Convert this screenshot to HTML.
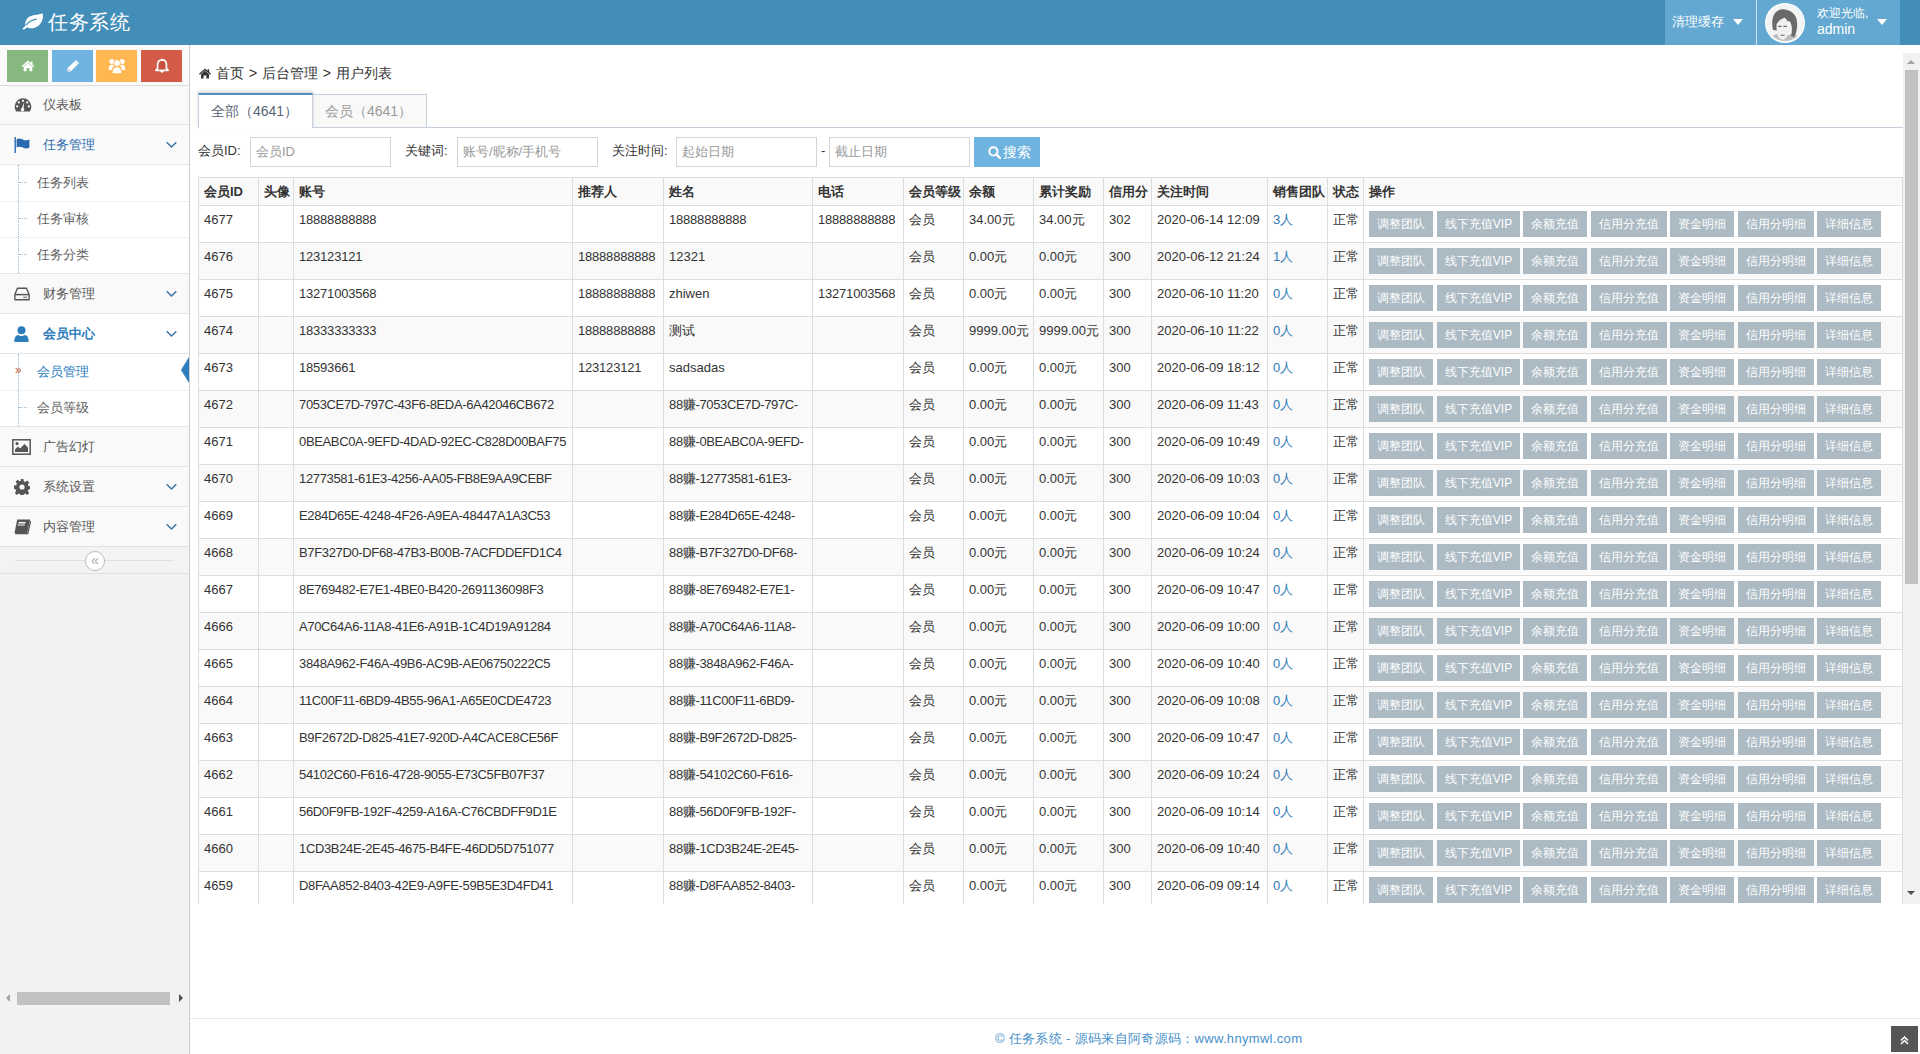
<!DOCTYPE html>
<html><head><meta charset="utf-8"><title>任务系统</title><style>
*{margin:0;padding:0;box-sizing:border-box}
html,body{width:1920px;height:1054px;overflow:hidden;background:#fff;font-family:"Liberation Sans",sans-serif;font-size:13px;color:#393939}
.abs{position:absolute}
#hdr{position:absolute;left:0;top:0;width:1920px;height:45px;background:#438eb9}
#brand{position:absolute;left:22px;top:7px;height:30px;color:#fff;font-size:20px;line-height:30px;white-space:nowrap}
#brand svg{position:absolute;left:0;top:6px}
#brand span{position:absolute;left:26px;top:0;letter-spacing:0.5px}
.lb{position:absolute;top:0;height:45px;background:#62a8d1;color:#fff}
#side{position:absolute;left:0;top:45px;width:190px;height:1009px;background:#f2f2f2;border-right:1px solid #ccc}
#sc{position:absolute;left:0;top:45px;width:189px;height:41px;background:#fafafa;border-bottom:1px solid #ddd}
.scb{position:absolute;top:50px;width:41px;height:32px}
.scb svg{position:absolute;left:50%;top:50%;transform:translate(-50%,-50%)}
.nb{position:absolute;left:0;width:189px;height:1px;background:#e5e5e5}
.ni{position:absolute;left:0;width:189px}
.nic{position:absolute;left:14px;top:50%;transform:translateY(-50%);line-height:0}
.nt{position:absolute;left:43px;top:50%;transform:translateY(-50%);font-size:13px;line-height:16px;color:#585858;white-space:nowrap}
.nt.open{color:#2b6cb0}
.nt.active{color:#2b7dbc;font-weight:bold}
.chev{position:absolute;left:166px;top:50%;transform:translateY(-50%);line-height:0}
.sm{position:absolute;left:0;width:189px;background:#fff}
.vdot{position:absolute;left:18px;width:1px;border-left:1px dotted #9dbdd6}
.hdot{position:absolute;left:0;width:189px;height:1px;border-top:1px dotted #e4e4e4}
.si{position:absolute;left:37px;height:35px;line-height:35px;font-size:13px;color:#616161;white-space:nowrap}
.si.act{color:#2b7dbc}
.mk{position:absolute;left:-18px;top:17px;width:8px;height:1px;border-top:1px dotted #9dbdd6}
.raq{position:absolute;left:-22px;top:-1px;color:#c86139;font-size:12px}
.tri{position:absolute;left:181px;width:0;height:0;border-top:13px solid transparent;border-bottom:13px solid transparent;border-right:8px solid #2b7dbc}
#coll{position:absolute;left:0;top:546px;width:189px;height:28px;background:#f3f3f3;border-top:1px solid #e0e0e0;border-bottom:1px solid #e0e0e0}
#coll .ln{position:absolute;left:15px;top:13px;width:159px;height:1px;background:#e0e0e0}
#coll .cc{position:absolute;left:85px;top:4px;width:20px;height:20px;border-radius:50%;background:#fff;border:1px solid #bbb;color:#aaa;font-size:14px;line-height:16px;text-align:center}
#content{position:absolute;left:190px;top:45px;width:1730px;height:1009px;background:#fff}
.hl{position:absolute;height:1px;background:#ddd}
.vl{position:absolute;width:1px;background:#ddd}
.thbg{position:absolute;background:#f9f9f9}
.rbg{position:absolute}
.th{position:absolute;height:27px;line-height:27px;font-weight:bold;color:#333;white-space:nowrap}
.td{position:absolute;line-height:18px;padding-top:5px;color:#333;white-space:nowrap}
.td.lk{color:#337ab7}
.td.gd{letter-spacing:-0.35px}
.td.ph{letter-spacing:-0.2px}
.btn{position:absolute;height:26px;line-height:26px;background:#abbac3;color:#fff;font-size:12px;text-align:center;white-space:nowrap}
.inp{position:absolute;top:137px;height:30px;border:1px solid #d5d5d5;background:#fff;color:#999;font-size:13px;line-height:28px;padding-left:5px;white-space:nowrap}
.lbl{position:absolute;top:142px;line-height:18px;color:#333;white-space:nowrap}
</style></head><body>
<div id="hdr">
 <div id="brand"><svg width="22" height="17" viewBox="0 0 22 17"><path d="M20.4 0.2C21.6 3 21.2 8 17.2 12 13.6 15.4 8.2 16.4 5.2 14.2L2.2 16.4C1.3 17 .3 16 .9 15.3L3.7 12.6C2.6 9.2 4.2 5.2 8.2 3.2 12.2 1.2 17 2 20.4 .2Z" fill="#fff"/><path d="M4.6 11.6C7 8.6 10.4 6.8 14.4 6.2" fill="none" stroke="#438eb9" stroke-width="1.2" stroke-linecap="round"/></svg><span>任务系统</span></div>
 <div class="lb" style="left:1665px;width:91px"><span class="abs" style="left:7px;top:13px;font-size:13px;line-height:18px">清理缓存</span><span class="abs" style="left:68px;top:19px;line-height:0"><svg width="10" height="6" viewBox="0 0 10 6"><path d="M0 0h10L5 6z" fill="#fff"/></svg></span></div>
 <div class="abs" style="left:1756px;top:0;width:1px;height:45px;background:#cfe3f1"></div>
 <div class="lb" style="left:1757px;width:143px">
   <svg class="abs" style="left:8px;top:3px" width="40" height="40" viewBox="0 0 40 40">
     <defs><clipPath id="av"><circle cx="20" cy="20" r="18"/></clipPath></defs>
     <circle cx="20" cy="20" r="20" fill="#fff"/>
     <g clip-path="url(#av)">
      <rect x="0" y="0" width="40" height="40" fill="#f4f4f4"/>
      <path d="M2 40c1-6 6-8 11-9l7 2 7-2c5 1 10 3 11 9z" fill="#bdbdbd"/>
      <path d="M8 27c-1.5-6-1-13 2-17 2.5-3 6-4 9.5-3.6 5 .6 9.5 3 11.5 8 1.5 4 1.4 9 .6 13-.5 2.5-1.5 5-2.6 6.5l-3-1c.8-2.5 1-5 .8-8-.2-3.5-1-5.5-2.5-7-3 1-6.5 2.4-9.6 5.5-1.2 1.3-2 2.8-2.6 4.2z" fill="#6a6a6a"/>
      <path d="M11.6 21c1.6-3 4.6-5 7.8-6.2 2.2 1 3.6 3.4 4.2 6.6.5 3.2.4 6.4-.5 9.6-.8 2.6-2.6 5.2-4.8 5.6-2.4.3-4.4-1.2-5.4-3.8-1-2.6-1.6-6.4-1.3-11.8z" fill="#f0f0f0"/>
      <path d="M13.2 23.4h3.4M18.4 23.4h3.4M15.6 32.2h4" stroke="#6a6a6a" stroke-width="1.1"/>
     </g>
     <circle cx="20" cy="20" r="18.2" fill="none" stroke="#cfe0ec" stroke-width=".6" stroke-dasharray="1.5 1"/>
   </svg>
   <span class="abs" style="left:60px;top:6px;font-size:12px;line-height:15px">欢迎光临,</span>
   <span class="abs" style="left:60px;top:21px;font-size:14px;line-height:17px">admin</span>
   <span class="abs" style="left:120px;top:19px;line-height:0"><svg width="10" height="6" viewBox="0 0 10 6"><path d="M0 0h10L5 6z" fill="#fff"/></svg></span>
 </div>
</div>
<div id="side"></div>
<div id="sc"></div>
<div class="scb" style="left:7px;background:#87b87f"><svg width="13" height="11" viewBox="0 0 13 11"><path d="M6.5 0L0 5.8l.9 1L6.5 1.9l5.6 4.9.9-1-2-1.8V1h-1.6v1.6z" fill="#fff"/><path d="M2.2 6.2L6.5 2.5l4.3 3.7V11H8V7.8H5V11H2.2z" fill="#fff"/></svg></div>
<div class="scb" style="left:52px;background:#6fb3e0"><svg width="13" height="13" viewBox="0 0 13 13"><path d="M9.4 0.4l3.2 3.2L4.2 12H1V8.8z" fill="#fff"/><path d="M8.2 1.8l3 3" stroke="#6fb3e0" stroke-width=".7"/><path d="M1.6 9.4l2 2" stroke="#c5a3c8" stroke-width="1"/></svg></div>
<div class="scb" style="left:96px;background:#ffb752"><svg width="17" height="15" viewBox="0 0 17 15"><circle cx="3.4" cy="3" r="2.5" fill="#fff"/><circle cx="13.6" cy="3" r="2.5" fill="#fff"/><path d="M0 11.4c0-3.2 1-5.2 3.5-5.2 1 0 1.7.3 2.2.7-1.3 1.1-2 2.7-2.1 4.5z" fill="#fff"/><path d="M17 11.4c0-3.2-1-5.2-3.5-5.2-1 0-1.7.3-2.2.7 1.3 1.1 2 2.7 2.1 4.5z" fill="#fff"/><circle cx="8.5" cy="4.6" r="3.4" fill="#fff" stroke="#ffb752" stroke-width=".8"/><path d="M3.8 15c0-3.8 1.4-6.4 4.7-6.4s4.7 2.6 4.7 6.4z" fill="#fff" stroke="#ffb752" stroke-width=".6"/></svg></div>
<div class="scb" style="left:141px;background:#d15b47"><svg width="14" height="15" viewBox="0 0 14 15"><path d="M7 1.3c2.6 0 4.4 2 4.4 4.8v3.6l1.7 2.1H.9l1.7-2.1V6.1C2.6 3.3 4.4 1.3 7 1.3z" fill="#c9503d" stroke="#fff" stroke-width="1.7" stroke-linejoin="round"/><path d="M5.3 12.6a1.7 1.7 0 0 0 3.4 0z" fill="#fff"/><rect x="6.3" y="0" width="1.4" height="1.6" fill="#fff"/></svg></div>
<div class="ni" style="top:86px;height:38px;background:#f9f9f9"><span class="nic"><svg width="18" height="16" viewBox="0 0 18 16"><path d="M9 1.2A8.3 8.3 0 0 0 0.7 9.5c0 2 .6 3.7 1.7 5.1h13.2c1.1-1.4 1.7-3.1 1.7-5.1A8.3 8.3 0 0 0 9 1.2z" fill="#555"/><circle cx="9" cy="3.8" r="1.1" fill="#fff"/><circle cx="4.8" cy="5.4" r="1.1" fill="#fff"/><circle cx="13.2" cy="5.4" r="1.1" fill="#fff"/><circle cx="3.2" cy="9.4" r="1.1" fill="#fff"/><circle cx="14.8" cy="9.4" r="1.1" fill="#fff"/><path d="M10.2 5.2L9.6 11.2A1.7 1.7 0 1 1 7.9 11z" fill="#fff"/></svg></span><span class="nt normal">仪表板</span></div>
<div class="nb" style="top:124px"></div>
<div class="ni" style="top:125px;height:39px;background:#fafafa"><span class="nic"><svg width="18" height="16" viewBox="0 0 18 16"><rect x="0.5" y="0" width="1.4" height="16" fill="#2b6cb0"/><path d="M2.6 2.2c2.2-1.4 4.3-.6 6.2.2 1.8.8 3.7 1.5 6.6.2v8.2c-2.9 1.3-4.8.6-6.6-.2-1.9-.8-4-1.6-6.2-.2z" fill="#2b6cb0"/></svg></span><span class="nt open">任务管理</span><span class="chev"><svg width="11" height="7" viewBox="0 0 11 7"><path d="M0.7 0.7L5.5 5.5 10.3 0.7" fill="none" stroke="#3a6fa0" stroke-width="1.4"/></svg></span></div>
<div class="nb" style="top:273px"></div>
<div class="ni" style="top:274px;height:39px;background:#f9f9f9"><span class="nic"><svg width="16" height="14" viewBox="0 0 18 14" preserveAspectRatio="none"><path d="M4 1.2h10l3 6.2V12.8H1V7.4z" fill="none" stroke="#555" stroke-width="1.5" stroke-linejoin="round"/><path d="M1.2 7.6h15.6" stroke="#555" stroke-width="1.5"/><rect x="10.6" y="9.6" width="1.5" height="1.5" fill="#555"/><rect x="13" y="9.6" width="1.5" height="1.5" fill="#555"/></svg></span><span class="nt normal">财务管理</span><span class="chev"><svg width="11" height="7" viewBox="0 0 11 7"><path d="M0.7 0.7L5.5 5.5 10.3 0.7" fill="none" stroke="#3a6fa0" stroke-width="1.4"/></svg></span></div>
<div class="nb" style="top:313px"></div>
<div class="ni" style="top:314px;height:39px;background:#fff"><span class="nic"><svg width="15" height="16" viewBox="0 0 15 16"><circle cx="7.5" cy="4.3" r="4" fill="#2b7dbc"/><path d="M0.3 16c0-3.3 .6-6.6 4.2-7 1 .8 1.9 1.1 3 1.1s2-.3 3-1.1c3.6 .4 4.2 3.7 4.2 7z" fill="#2b7dbc"/></svg></span><span class="nt active">会员中心</span><span class="chev"><svg width="11" height="7" viewBox="0 0 11 7"><path d="M0.7 0.7L5.5 5.5 10.3 0.7" fill="none" stroke="#3a6fa0" stroke-width="1.4"/></svg></span></div>
<div class="nb" style="top:426px"></div>
<div class="ni" style="top:427px;height:39px;background:#f9f9f9"><span class="nic"><svg width="19" height="16" viewBox="0 0 19 16" style="margin-left:-2px"><rect x="0.8" y="0.8" width="17.4" height="14.4" fill="none" stroke="#555" stroke-width="1.5"/><circle cx="5" cy="4.6" r="1.6" fill="#555"/><path d="M3 13V10.4L6 7.6 8 9.6 12.5 5 16 8.6V13z" fill="#555"/></svg></span><span class="nt normal">广告幻灯</span></div>
<div class="nb" style="top:466px"></div>
<div class="ni" style="top:467px;height:39px;background:#f9f9f9"><span class="nic"><svg width="16" height="16" viewBox="0 0 16 16"><path d="M6.6 0h2.8l.4 2.3 1.5.7 1.9-1.4 2 2-1.4 1.9.7 1.5 2.3.4v2.8l-2.3.4-.7 1.5 1.4 1.9-2 2-1.9-1.4-1.5.7-.4 2.3H6.6l-.4-2.3-1.5-.7-1.9 1.4-2-2 1.4-1.9-.7-1.5L0 9.4V6.6l2.3-.4.7-1.5-1.4-1.9 2-2 1.9 1.4 1.5-.7z" fill="#555"/><circle cx="8" cy="8" r="2.6" fill="#f9f9f9"/></svg></span><span class="nt normal">系统设置</span><span class="chev"><svg width="11" height="7" viewBox="0 0 11 7"><path d="M0.7 0.7L5.5 5.5 10.3 0.7" fill="none" stroke="#3a6fa0" stroke-width="1.4"/></svg></span></div>
<div class="nb" style="top:506px"></div>
<div class="ni" style="top:507px;height:39px;background:#f9f9f9"><span class="nic"><svg width="17" height="16" viewBox="0 0 17 16"><path d="M3.2 0.5h13l-3 13.5H0.5z" fill="#555"/><path d="M1.2 14.6h12.6l2.8-12.4" fill="none" stroke="#555" stroke-width="1.2"/><rect x="5.3" y="3" width="7" height="1.4" fill="#f9f9f9" transform="skewX(-12)"/><rect x="5" y="5.5" width="7" height="1.1" fill="#f9f9f9" transform="skewX(-12)"/></svg></span><span class="nt normal">内容管理</span><span class="chev"><svg width="11" height="7" viewBox="0 0 11 7"><path d="M0.7 0.7L5.5 5.5 10.3 0.7" fill="none" stroke="#3a6fa0" stroke-width="1.4"/></svg></span></div>
<div class="nb" style="top:164px"></div>
<div class="sm" style="top:165px;height:108px"></div>
<div class="vdot" style="top:165px;height:108px"></div>
<div class="si" style="top:165px"><span class="mk"></span>任务列表</div>
<div class="hdot" style="top:201px"></div>
<div class="si" style="top:201px"><span class="mk"></span>任务审核</div>
<div class="hdot" style="top:237px"></div>
<div class="si" style="top:237px"><span class="mk"></span>任务分类</div>
<div class="nb" style="top:353px"></div>
<div class="sm" style="top:354px;height:72px"></div>
<div class="vdot" style="top:354px;height:72px"></div>
<div class="si act" style="top:354px"><span class="raq">&raquo;</span>会员管理</div>
<div class="tri" style="top:357px"></div>
<div class="hdot" style="top:390px"></div>
<div class="si" style="top:390px"><span class="mk"></span>会员等级</div>
<div id="coll"><div class="ln"></div><div class="cc">&laquo;</div></div>
<!-- sidebar h scrollbar -->
<div class="abs" style="left:17px;top:992px;width:153px;height:13px;background:#c1c1c1"></div>
<div class="abs" style="left:6px;top:994px;width:0;height:0;border-top:4px solid transparent;border-bottom:4px solid transparent;border-right:4px solid #a3a3a3"></div>
<div class="abs" style="left:179px;top:994px;width:0;height:0;border-top:4px solid transparent;border-bottom:4px solid transparent;border-left:4px solid #505050"></div>

<div id="content"></div>
<div class="abs" style="left:190px;top:53px;width:1713px;height:851px;overflow:hidden">
 <div class="abs" style="left:-190px;top:-53px;width:1920px;height:1054px">
  <span class="abs" style="left:199px;top:68px;line-height:0"><svg width="12" height="11" viewBox="0 0 13 11"><path d="M6.5 0L0 5.8l.9 1L6.5 1.9l5.6 4.9.9-1-2-1.8V1h-1.6v1.6z" fill="#333"/><path d="M2.2 6.2L6.5 2.5l4.3 3.7V11H8V7.8H5V11H2.2z" fill="#333"/></svg></span>
  <span class="abs" style="left:216px;top:63px;font-size:14px;line-height:20px;color:#333;white-space:nowrap;word-spacing:1px">首页 &gt; 后台管理 &gt; 用户列表</span>
  <!-- tabs -->
  <div class="abs" style="left:198px;top:127px;width:1705px;height:1px;background:#c5d0dc"></div>
  <div class="abs" style="left:312px;top:94px;width:115px;height:34px;background:#f9f9f9;border:1px solid #c5d0dc;color:#999;font-size:14px;line-height:32px;padding-left:12px;white-space:nowrap">会员（4641）</div>
  <div class="abs" style="left:198px;top:93px;width:115px;height:35px;background:#fff;border:1px solid #c5d0dc;border-top:2px solid #4c8fbd;border-bottom:0;color:#576373;font-size:14px;line-height:32px;padding-left:12px;white-space:nowrap;box-shadow:0 -2px 3px 0 rgba(0,0,0,.15)">全部（4641）</div>
  <!-- search -->
  <span class="lbl" style="left:198px">会员ID:</span>
  <div class="inp" style="left:250px;width:141px">会员ID</div>
  <span class="lbl" style="left:405px">关键词:</span>
  <div class="inp" style="left:457px;width:141px">账号/昵称/手机号</div>
  <span class="lbl" style="left:612px">关注时间:</span>
  <div class="inp" style="left:676px;width:141px">起始日期</div>
  <span class="lbl" style="left:821px">-</span>
  <div class="inp" style="left:829px;width:141px">截止日期</div>
  <div class="abs" style="left:974px;top:137px;width:66px;height:30px;background:#6fb3e0;color:#fff;font-size:14px;line-height:30px;white-space:nowrap"><span class="abs" style="left:14px;top:9px;line-height:0"><svg width="13" height="13" viewBox="0 0 13 13"><circle cx="5.4" cy="5.4" r="4.1" fill="none" stroke="#fff" stroke-width="2"/><path d="M8.3 8.3l3.6 3.6" stroke="#fff" stroke-width="2.4" stroke-linecap="round"/></svg></span><span class="abs" style="left:29px;top:0">搜索</span></div>
  <div class="thbg" style="left:198px;top:177px;width:1705px;height:29px"></div>
<div class="rbg" style="top:205px;left:198px;width:1705px;height:38px;background:#fff"></div>
<div class="rbg" style="top:242px;left:198px;width:1705px;height:38px;background:#f9f9f9"></div>
<div class="rbg" style="top:279px;left:198px;width:1705px;height:38px;background:#fff"></div>
<div class="rbg" style="top:316px;left:198px;width:1705px;height:38px;background:#f9f9f9"></div>
<div class="rbg" style="top:353px;left:198px;width:1705px;height:38px;background:#fff"></div>
<div class="rbg" style="top:390px;left:198px;width:1705px;height:38px;background:#f9f9f9"></div>
<div class="rbg" style="top:427px;left:198px;width:1705px;height:38px;background:#fff"></div>
<div class="rbg" style="top:464px;left:198px;width:1705px;height:38px;background:#f9f9f9"></div>
<div class="rbg" style="top:501px;left:198px;width:1705px;height:38px;background:#fff"></div>
<div class="rbg" style="top:538px;left:198px;width:1705px;height:38px;background:#f9f9f9"></div>
<div class="rbg" style="top:575px;left:198px;width:1705px;height:38px;background:#fff"></div>
<div class="rbg" style="top:612px;left:198px;width:1705px;height:38px;background:#f9f9f9"></div>
<div class="rbg" style="top:649px;left:198px;width:1705px;height:38px;background:#fff"></div>
<div class="rbg" style="top:686px;left:198px;width:1705px;height:38px;background:#f9f9f9"></div>
<div class="rbg" style="top:723px;left:198px;width:1705px;height:38px;background:#fff"></div>
<div class="rbg" style="top:760px;left:198px;width:1705px;height:38px;background:#f9f9f9"></div>
<div class="rbg" style="top:797px;left:198px;width:1705px;height:38px;background:#fff"></div>
<div class="rbg" style="top:834px;left:198px;width:1705px;height:38px;background:#f9f9f9"></div>
<div class="rbg" style="top:871px;left:198px;width:1705px;height:38px;background:#fff"></div>
<div class="hl" style="top:177px;left:198px;width:1705px"></div>
<div class="hl" style="top:205px;left:198px;width:1705px"></div>
<div class="hl" style="top:242px;left:198px;width:1705px"></div>
<div class="hl" style="top:279px;left:198px;width:1705px"></div>
<div class="hl" style="top:316px;left:198px;width:1705px"></div>
<div class="hl" style="top:353px;left:198px;width:1705px"></div>
<div class="hl" style="top:390px;left:198px;width:1705px"></div>
<div class="hl" style="top:427px;left:198px;width:1705px"></div>
<div class="hl" style="top:464px;left:198px;width:1705px"></div>
<div class="hl" style="top:501px;left:198px;width:1705px"></div>
<div class="hl" style="top:538px;left:198px;width:1705px"></div>
<div class="hl" style="top:575px;left:198px;width:1705px"></div>
<div class="hl" style="top:612px;left:198px;width:1705px"></div>
<div class="hl" style="top:649px;left:198px;width:1705px"></div>
<div class="hl" style="top:686px;left:198px;width:1705px"></div>
<div class="hl" style="top:723px;left:198px;width:1705px"></div>
<div class="hl" style="top:760px;left:198px;width:1705px"></div>
<div class="hl" style="top:797px;left:198px;width:1705px"></div>
<div class="hl" style="top:834px;left:198px;width:1705px"></div>
<div class="hl" style="top:871px;left:198px;width:1705px"></div>
<div class="hl" style="top:908px;left:198px;width:1705px"></div>
<div class="vl" style="left:198px;top:177px;height:732px"></div>
<div class="vl" style="left:258px;top:177px;height:732px"></div>
<div class="vl" style="left:293px;top:177px;height:732px"></div>
<div class="vl" style="left:572px;top:177px;height:732px"></div>
<div class="vl" style="left:663px;top:177px;height:732px"></div>
<div class="vl" style="left:812px;top:177px;height:732px"></div>
<div class="vl" style="left:903px;top:177px;height:732px"></div>
<div class="vl" style="left:963px;top:177px;height:732px"></div>
<div class="vl" style="left:1033px;top:177px;height:732px"></div>
<div class="vl" style="left:1103px;top:177px;height:732px"></div>
<div class="vl" style="left:1151px;top:177px;height:732px"></div>
<div class="vl" style="left:1267px;top:177px;height:732px"></div>
<div class="vl" style="left:1327px;top:177px;height:732px"></div>
<div class="vl" style="left:1363px;top:177px;height:732px"></div>
<div class="vl" style="left:1902px;top:177px;height:732px"></div>
<div class="th" style="left:204px;top:178px">会员ID</div>
<div class="th" style="left:264px;top:178px">头像</div>
<div class="th" style="left:299px;top:178px">账号</div>
<div class="th" style="left:578px;top:178px">推荐人</div>
<div class="th" style="left:669px;top:178px">姓名</div>
<div class="th" style="left:818px;top:178px">电话</div>
<div class="th" style="left:909px;top:178px">会员等级</div>
<div class="th" style="left:969px;top:178px">余额</div>
<div class="th" style="left:1039px;top:178px">累计奖励</div>
<div class="th" style="left:1109px;top:178px">信用分</div>
<div class="th" style="left:1157px;top:178px">关注时间</div>
<div class="th" style="left:1273px;top:178px">销售团队</div>
<div class="th" style="left:1333px;top:178px">状态</div>
<div class="th" style="left:1369px;top:178px">操作</div>
<div class="td" style="left:204px;top:206px">4677</div>
<div class="td ph" style="left:299px;top:206px">18888888888</div>
<div class="td ph" style="left:669px;top:206px">18888888888</div>
<div class="td ph" style="left:818px;top:206px">18888888888</div>
<div class="td" style="left:909px;top:206px">会员</div>
<div class="td" style="left:969px;top:206px">34.00元</div>
<div class="td" style="left:1039px;top:206px">34.00元</div>
<div class="td" style="left:1109px;top:206px">302</div>
<div class="td" style="left:1157px;top:206px">2020-06-14 12:09</div>
<div class="td lk" style="left:1273px;top:206px">3人</div>
<div class="td" style="left:1333px;top:206px">正常</div>
<div class="btn" style="left:1369px;top:211px;width:64px">调整团队</div>
<div class="btn" style="left:1437px;top:211px;width:83px">线下充值VIP</div>
<div class="btn" style="left:1523px;top:211px;width:64px">余额充值</div>
<div class="btn" style="left:1591px;top:211px;width:76px">信用分充值</div>
<div class="btn" style="left:1670px;top:211px;width:64px">资金明细</div>
<div class="btn" style="left:1738px;top:211px;width:76px">信用分明细</div>
<div class="btn" style="left:1817px;top:211px;width:64px">详细信息</div>
<div class="td" style="left:204px;top:243px">4676</div>
<div class="td ph" style="left:299px;top:243px">123123121</div>
<div class="td ph" style="left:578px;top:243px">18888888888</div>
<div class="td" style="left:669px;top:243px">12321</div>
<div class="td" style="left:909px;top:243px">会员</div>
<div class="td" style="left:969px;top:243px">0.00元</div>
<div class="td" style="left:1039px;top:243px">0.00元</div>
<div class="td" style="left:1109px;top:243px">300</div>
<div class="td" style="left:1157px;top:243px">2020-06-12 21:24</div>
<div class="td lk" style="left:1273px;top:243px">1人</div>
<div class="td" style="left:1333px;top:243px">正常</div>
<div class="btn" style="left:1369px;top:248px;width:64px">调整团队</div>
<div class="btn" style="left:1437px;top:248px;width:83px">线下充值VIP</div>
<div class="btn" style="left:1523px;top:248px;width:64px">余额充值</div>
<div class="btn" style="left:1591px;top:248px;width:76px">信用分充值</div>
<div class="btn" style="left:1670px;top:248px;width:64px">资金明细</div>
<div class="btn" style="left:1738px;top:248px;width:76px">信用分明细</div>
<div class="btn" style="left:1817px;top:248px;width:64px">详细信息</div>
<div class="td" style="left:204px;top:280px">4675</div>
<div class="td ph" style="left:299px;top:280px">13271003568</div>
<div class="td ph" style="left:578px;top:280px">18888888888</div>
<div class="td" style="left:669px;top:280px">zhiwen</div>
<div class="td ph" style="left:818px;top:280px">13271003568</div>
<div class="td" style="left:909px;top:280px">会员</div>
<div class="td" style="left:969px;top:280px">0.00元</div>
<div class="td" style="left:1039px;top:280px">0.00元</div>
<div class="td" style="left:1109px;top:280px">300</div>
<div class="td" style="left:1157px;top:280px">2020-06-10 11:20</div>
<div class="td lk" style="left:1273px;top:280px">0人</div>
<div class="td" style="left:1333px;top:280px">正常</div>
<div class="btn" style="left:1369px;top:285px;width:64px">调整团队</div>
<div class="btn" style="left:1437px;top:285px;width:83px">线下充值VIP</div>
<div class="btn" style="left:1523px;top:285px;width:64px">余额充值</div>
<div class="btn" style="left:1591px;top:285px;width:76px">信用分充值</div>
<div class="btn" style="left:1670px;top:285px;width:64px">资金明细</div>
<div class="btn" style="left:1738px;top:285px;width:76px">信用分明细</div>
<div class="btn" style="left:1817px;top:285px;width:64px">详细信息</div>
<div class="td" style="left:204px;top:317px">4674</div>
<div class="td ph" style="left:299px;top:317px">18333333333</div>
<div class="td ph" style="left:578px;top:317px">18888888888</div>
<div class="td" style="left:669px;top:317px">测试</div>
<div class="td" style="left:909px;top:317px">会员</div>
<div class="td" style="left:969px;top:317px">9999.00元</div>
<div class="td" style="left:1039px;top:317px">9999.00元</div>
<div class="td" style="left:1109px;top:317px">300</div>
<div class="td" style="left:1157px;top:317px">2020-06-10 11:22</div>
<div class="td lk" style="left:1273px;top:317px">0人</div>
<div class="td" style="left:1333px;top:317px">正常</div>
<div class="btn" style="left:1369px;top:322px;width:64px">调整团队</div>
<div class="btn" style="left:1437px;top:322px;width:83px">线下充值VIP</div>
<div class="btn" style="left:1523px;top:322px;width:64px">余额充值</div>
<div class="btn" style="left:1591px;top:322px;width:76px">信用分充值</div>
<div class="btn" style="left:1670px;top:322px;width:64px">资金明细</div>
<div class="btn" style="left:1738px;top:322px;width:76px">信用分明细</div>
<div class="btn" style="left:1817px;top:322px;width:64px">详细信息</div>
<div class="td" style="left:204px;top:354px">4673</div>
<div class="td ph" style="left:299px;top:354px">18593661</div>
<div class="td ph" style="left:578px;top:354px">123123121</div>
<div class="td" style="left:669px;top:354px">sadsadas</div>
<div class="td" style="left:909px;top:354px">会员</div>
<div class="td" style="left:969px;top:354px">0.00元</div>
<div class="td" style="left:1039px;top:354px">0.00元</div>
<div class="td" style="left:1109px;top:354px">300</div>
<div class="td" style="left:1157px;top:354px">2020-06-09 18:12</div>
<div class="td lk" style="left:1273px;top:354px">0人</div>
<div class="td" style="left:1333px;top:354px">正常</div>
<div class="btn" style="left:1369px;top:359px;width:64px">调整团队</div>
<div class="btn" style="left:1437px;top:359px;width:83px">线下充值VIP</div>
<div class="btn" style="left:1523px;top:359px;width:64px">余额充值</div>
<div class="btn" style="left:1591px;top:359px;width:76px">信用分充值</div>
<div class="btn" style="left:1670px;top:359px;width:64px">资金明细</div>
<div class="btn" style="left:1738px;top:359px;width:76px">信用分明细</div>
<div class="btn" style="left:1817px;top:359px;width:64px">详细信息</div>
<div class="td" style="left:204px;top:391px">4672</div>
<div class="td gd" style="left:299px;top:391px">7053CE7D-797C-43F6-8EDA-6A42046CB672</div>
<div class="td gd" style="left:669px;top:391px">88赚-7053CE7D-797C-</div>
<div class="td" style="left:909px;top:391px">会员</div>
<div class="td" style="left:969px;top:391px">0.00元</div>
<div class="td" style="left:1039px;top:391px">0.00元</div>
<div class="td" style="left:1109px;top:391px">300</div>
<div class="td" style="left:1157px;top:391px">2020-06-09 11:43</div>
<div class="td lk" style="left:1273px;top:391px">0人</div>
<div class="td" style="left:1333px;top:391px">正常</div>
<div class="btn" style="left:1369px;top:396px;width:64px">调整团队</div>
<div class="btn" style="left:1437px;top:396px;width:83px">线下充值VIP</div>
<div class="btn" style="left:1523px;top:396px;width:64px">余额充值</div>
<div class="btn" style="left:1591px;top:396px;width:76px">信用分充值</div>
<div class="btn" style="left:1670px;top:396px;width:64px">资金明细</div>
<div class="btn" style="left:1738px;top:396px;width:76px">信用分明细</div>
<div class="btn" style="left:1817px;top:396px;width:64px">详细信息</div>
<div class="td" style="left:204px;top:428px">4671</div>
<div class="td gd" style="left:299px;top:428px">0BEABC0A-9EFD-4DAD-92EC-C828D00BAF75</div>
<div class="td gd" style="left:669px;top:428px">88赚-0BEABC0A-9EFD-</div>
<div class="td" style="left:909px;top:428px">会员</div>
<div class="td" style="left:969px;top:428px">0.00元</div>
<div class="td" style="left:1039px;top:428px">0.00元</div>
<div class="td" style="left:1109px;top:428px">300</div>
<div class="td" style="left:1157px;top:428px">2020-06-09 10:49</div>
<div class="td lk" style="left:1273px;top:428px">0人</div>
<div class="td" style="left:1333px;top:428px">正常</div>
<div class="btn" style="left:1369px;top:433px;width:64px">调整团队</div>
<div class="btn" style="left:1437px;top:433px;width:83px">线下充值VIP</div>
<div class="btn" style="left:1523px;top:433px;width:64px">余额充值</div>
<div class="btn" style="left:1591px;top:433px;width:76px">信用分充值</div>
<div class="btn" style="left:1670px;top:433px;width:64px">资金明细</div>
<div class="btn" style="left:1738px;top:433px;width:76px">信用分明细</div>
<div class="btn" style="left:1817px;top:433px;width:64px">详细信息</div>
<div class="td" style="left:204px;top:465px">4670</div>
<div class="td gd" style="left:299px;top:465px">12773581-61E3-4256-AA05-FB8E9AA9CEBF</div>
<div class="td gd" style="left:669px;top:465px">88赚-12773581-61E3-</div>
<div class="td" style="left:909px;top:465px">会员</div>
<div class="td" style="left:969px;top:465px">0.00元</div>
<div class="td" style="left:1039px;top:465px">0.00元</div>
<div class="td" style="left:1109px;top:465px">300</div>
<div class="td" style="left:1157px;top:465px">2020-06-09 10:03</div>
<div class="td lk" style="left:1273px;top:465px">0人</div>
<div class="td" style="left:1333px;top:465px">正常</div>
<div class="btn" style="left:1369px;top:470px;width:64px">调整团队</div>
<div class="btn" style="left:1437px;top:470px;width:83px">线下充值VIP</div>
<div class="btn" style="left:1523px;top:470px;width:64px">余额充值</div>
<div class="btn" style="left:1591px;top:470px;width:76px">信用分充值</div>
<div class="btn" style="left:1670px;top:470px;width:64px">资金明细</div>
<div class="btn" style="left:1738px;top:470px;width:76px">信用分明细</div>
<div class="btn" style="left:1817px;top:470px;width:64px">详细信息</div>
<div class="td" style="left:204px;top:502px">4669</div>
<div class="td gd" style="left:299px;top:502px">E284D65E-4248-4F26-A9EA-48447A1A3C53</div>
<div class="td gd" style="left:669px;top:502px">88赚-E284D65E-4248-</div>
<div class="td" style="left:909px;top:502px">会员</div>
<div class="td" style="left:969px;top:502px">0.00元</div>
<div class="td" style="left:1039px;top:502px">0.00元</div>
<div class="td" style="left:1109px;top:502px">300</div>
<div class="td" style="left:1157px;top:502px">2020-06-09 10:04</div>
<div class="td lk" style="left:1273px;top:502px">0人</div>
<div class="td" style="left:1333px;top:502px">正常</div>
<div class="btn" style="left:1369px;top:507px;width:64px">调整团队</div>
<div class="btn" style="left:1437px;top:507px;width:83px">线下充值VIP</div>
<div class="btn" style="left:1523px;top:507px;width:64px">余额充值</div>
<div class="btn" style="left:1591px;top:507px;width:76px">信用分充值</div>
<div class="btn" style="left:1670px;top:507px;width:64px">资金明细</div>
<div class="btn" style="left:1738px;top:507px;width:76px">信用分明细</div>
<div class="btn" style="left:1817px;top:507px;width:64px">详细信息</div>
<div class="td" style="left:204px;top:539px">4668</div>
<div class="td gd" style="left:299px;top:539px">B7F327D0-DF68-47B3-B00B-7ACFDDEFD1C4</div>
<div class="td gd" style="left:669px;top:539px">88赚-B7F327D0-DF68-</div>
<div class="td" style="left:909px;top:539px">会员</div>
<div class="td" style="left:969px;top:539px">0.00元</div>
<div class="td" style="left:1039px;top:539px">0.00元</div>
<div class="td" style="left:1109px;top:539px">300</div>
<div class="td" style="left:1157px;top:539px">2020-06-09 10:24</div>
<div class="td lk" style="left:1273px;top:539px">0人</div>
<div class="td" style="left:1333px;top:539px">正常</div>
<div class="btn" style="left:1369px;top:544px;width:64px">调整团队</div>
<div class="btn" style="left:1437px;top:544px;width:83px">线下充值VIP</div>
<div class="btn" style="left:1523px;top:544px;width:64px">余额充值</div>
<div class="btn" style="left:1591px;top:544px;width:76px">信用分充值</div>
<div class="btn" style="left:1670px;top:544px;width:64px">资金明细</div>
<div class="btn" style="left:1738px;top:544px;width:76px">信用分明细</div>
<div class="btn" style="left:1817px;top:544px;width:64px">详细信息</div>
<div class="td" style="left:204px;top:576px">4667</div>
<div class="td gd" style="left:299px;top:576px">8E769482-E7E1-4BE0-B420-2691136098F3</div>
<div class="td gd" style="left:669px;top:576px">88赚-8E769482-E7E1-</div>
<div class="td" style="left:909px;top:576px">会员</div>
<div class="td" style="left:969px;top:576px">0.00元</div>
<div class="td" style="left:1039px;top:576px">0.00元</div>
<div class="td" style="left:1109px;top:576px">300</div>
<div class="td" style="left:1157px;top:576px">2020-06-09 10:47</div>
<div class="td lk" style="left:1273px;top:576px">0人</div>
<div class="td" style="left:1333px;top:576px">正常</div>
<div class="btn" style="left:1369px;top:581px;width:64px">调整团队</div>
<div class="btn" style="left:1437px;top:581px;width:83px">线下充值VIP</div>
<div class="btn" style="left:1523px;top:581px;width:64px">余额充值</div>
<div class="btn" style="left:1591px;top:581px;width:76px">信用分充值</div>
<div class="btn" style="left:1670px;top:581px;width:64px">资金明细</div>
<div class="btn" style="left:1738px;top:581px;width:76px">信用分明细</div>
<div class="btn" style="left:1817px;top:581px;width:64px">详细信息</div>
<div class="td" style="left:204px;top:613px">4666</div>
<div class="td gd" style="left:299px;top:613px">A70C64A6-11A8-41E6-A91B-1C4D19A91284</div>
<div class="td gd" style="left:669px;top:613px">88赚-A70C64A6-11A8-</div>
<div class="td" style="left:909px;top:613px">会员</div>
<div class="td" style="left:969px;top:613px">0.00元</div>
<div class="td" style="left:1039px;top:613px">0.00元</div>
<div class="td" style="left:1109px;top:613px">300</div>
<div class="td" style="left:1157px;top:613px">2020-06-09 10:00</div>
<div class="td lk" style="left:1273px;top:613px">0人</div>
<div class="td" style="left:1333px;top:613px">正常</div>
<div class="btn" style="left:1369px;top:618px;width:64px">调整团队</div>
<div class="btn" style="left:1437px;top:618px;width:83px">线下充值VIP</div>
<div class="btn" style="left:1523px;top:618px;width:64px">余额充值</div>
<div class="btn" style="left:1591px;top:618px;width:76px">信用分充值</div>
<div class="btn" style="left:1670px;top:618px;width:64px">资金明细</div>
<div class="btn" style="left:1738px;top:618px;width:76px">信用分明细</div>
<div class="btn" style="left:1817px;top:618px;width:64px">详细信息</div>
<div class="td" style="left:204px;top:650px">4665</div>
<div class="td gd" style="left:299px;top:650px">3848A962-F46A-49B6-AC9B-AE06750222C5</div>
<div class="td gd" style="left:669px;top:650px">88赚-3848A962-F46A-</div>
<div class="td" style="left:909px;top:650px">会员</div>
<div class="td" style="left:969px;top:650px">0.00元</div>
<div class="td" style="left:1039px;top:650px">0.00元</div>
<div class="td" style="left:1109px;top:650px">300</div>
<div class="td" style="left:1157px;top:650px">2020-06-09 10:40</div>
<div class="td lk" style="left:1273px;top:650px">0人</div>
<div class="td" style="left:1333px;top:650px">正常</div>
<div class="btn" style="left:1369px;top:655px;width:64px">调整团队</div>
<div class="btn" style="left:1437px;top:655px;width:83px">线下充值VIP</div>
<div class="btn" style="left:1523px;top:655px;width:64px">余额充值</div>
<div class="btn" style="left:1591px;top:655px;width:76px">信用分充值</div>
<div class="btn" style="left:1670px;top:655px;width:64px">资金明细</div>
<div class="btn" style="left:1738px;top:655px;width:76px">信用分明细</div>
<div class="btn" style="left:1817px;top:655px;width:64px">详细信息</div>
<div class="td" style="left:204px;top:687px">4664</div>
<div class="td gd" style="left:299px;top:687px">11C00F11-6BD9-4B55-96A1-A65E0CDE4723</div>
<div class="td gd" style="left:669px;top:687px">88赚-11C00F11-6BD9-</div>
<div class="td" style="left:909px;top:687px">会员</div>
<div class="td" style="left:969px;top:687px">0.00元</div>
<div class="td" style="left:1039px;top:687px">0.00元</div>
<div class="td" style="left:1109px;top:687px">300</div>
<div class="td" style="left:1157px;top:687px">2020-06-09 10:08</div>
<div class="td lk" style="left:1273px;top:687px">0人</div>
<div class="td" style="left:1333px;top:687px">正常</div>
<div class="btn" style="left:1369px;top:692px;width:64px">调整团队</div>
<div class="btn" style="left:1437px;top:692px;width:83px">线下充值VIP</div>
<div class="btn" style="left:1523px;top:692px;width:64px">余额充值</div>
<div class="btn" style="left:1591px;top:692px;width:76px">信用分充值</div>
<div class="btn" style="left:1670px;top:692px;width:64px">资金明细</div>
<div class="btn" style="left:1738px;top:692px;width:76px">信用分明细</div>
<div class="btn" style="left:1817px;top:692px;width:64px">详细信息</div>
<div class="td" style="left:204px;top:724px">4663</div>
<div class="td gd" style="left:299px;top:724px">B9F2672D-D825-41E7-920D-A4CACE8CE56F</div>
<div class="td gd" style="left:669px;top:724px">88赚-B9F2672D-D825-</div>
<div class="td" style="left:909px;top:724px">会员</div>
<div class="td" style="left:969px;top:724px">0.00元</div>
<div class="td" style="left:1039px;top:724px">0.00元</div>
<div class="td" style="left:1109px;top:724px">300</div>
<div class="td" style="left:1157px;top:724px">2020-06-09 10:47</div>
<div class="td lk" style="left:1273px;top:724px">0人</div>
<div class="td" style="left:1333px;top:724px">正常</div>
<div class="btn" style="left:1369px;top:729px;width:64px">调整团队</div>
<div class="btn" style="left:1437px;top:729px;width:83px">线下充值VIP</div>
<div class="btn" style="left:1523px;top:729px;width:64px">余额充值</div>
<div class="btn" style="left:1591px;top:729px;width:76px">信用分充值</div>
<div class="btn" style="left:1670px;top:729px;width:64px">资金明细</div>
<div class="btn" style="left:1738px;top:729px;width:76px">信用分明细</div>
<div class="btn" style="left:1817px;top:729px;width:64px">详细信息</div>
<div class="td" style="left:204px;top:761px">4662</div>
<div class="td gd" style="left:299px;top:761px">54102C60-F616-4728-9055-E73C5FB07F37</div>
<div class="td gd" style="left:669px;top:761px">88赚-54102C60-F616-</div>
<div class="td" style="left:909px;top:761px">会员</div>
<div class="td" style="left:969px;top:761px">0.00元</div>
<div class="td" style="left:1039px;top:761px">0.00元</div>
<div class="td" style="left:1109px;top:761px">300</div>
<div class="td" style="left:1157px;top:761px">2020-06-09 10:24</div>
<div class="td lk" style="left:1273px;top:761px">0人</div>
<div class="td" style="left:1333px;top:761px">正常</div>
<div class="btn" style="left:1369px;top:766px;width:64px">调整团队</div>
<div class="btn" style="left:1437px;top:766px;width:83px">线下充值VIP</div>
<div class="btn" style="left:1523px;top:766px;width:64px">余额充值</div>
<div class="btn" style="left:1591px;top:766px;width:76px">信用分充值</div>
<div class="btn" style="left:1670px;top:766px;width:64px">资金明细</div>
<div class="btn" style="left:1738px;top:766px;width:76px">信用分明细</div>
<div class="btn" style="left:1817px;top:766px;width:64px">详细信息</div>
<div class="td" style="left:204px;top:798px">4661</div>
<div class="td gd" style="left:299px;top:798px">56D0F9FB-192F-4259-A16A-C76CBDFF9D1E</div>
<div class="td gd" style="left:669px;top:798px">88赚-56D0F9FB-192F-</div>
<div class="td" style="left:909px;top:798px">会员</div>
<div class="td" style="left:969px;top:798px">0.00元</div>
<div class="td" style="left:1039px;top:798px">0.00元</div>
<div class="td" style="left:1109px;top:798px">300</div>
<div class="td" style="left:1157px;top:798px">2020-06-09 10:14</div>
<div class="td lk" style="left:1273px;top:798px">0人</div>
<div class="td" style="left:1333px;top:798px">正常</div>
<div class="btn" style="left:1369px;top:803px;width:64px">调整团队</div>
<div class="btn" style="left:1437px;top:803px;width:83px">线下充值VIP</div>
<div class="btn" style="left:1523px;top:803px;width:64px">余额充值</div>
<div class="btn" style="left:1591px;top:803px;width:76px">信用分充值</div>
<div class="btn" style="left:1670px;top:803px;width:64px">资金明细</div>
<div class="btn" style="left:1738px;top:803px;width:76px">信用分明细</div>
<div class="btn" style="left:1817px;top:803px;width:64px">详细信息</div>
<div class="td" style="left:204px;top:835px">4660</div>
<div class="td gd" style="left:299px;top:835px">1CD3B24E-2E45-4675-B4FE-46DD5D751077</div>
<div class="td gd" style="left:669px;top:835px">88赚-1CD3B24E-2E45-</div>
<div class="td" style="left:909px;top:835px">会员</div>
<div class="td" style="left:969px;top:835px">0.00元</div>
<div class="td" style="left:1039px;top:835px">0.00元</div>
<div class="td" style="left:1109px;top:835px">300</div>
<div class="td" style="left:1157px;top:835px">2020-06-09 10:40</div>
<div class="td lk" style="left:1273px;top:835px">0人</div>
<div class="td" style="left:1333px;top:835px">正常</div>
<div class="btn" style="left:1369px;top:840px;width:64px">调整团队</div>
<div class="btn" style="left:1437px;top:840px;width:83px">线下充值VIP</div>
<div class="btn" style="left:1523px;top:840px;width:64px">余额充值</div>
<div class="btn" style="left:1591px;top:840px;width:76px">信用分充值</div>
<div class="btn" style="left:1670px;top:840px;width:64px">资金明细</div>
<div class="btn" style="left:1738px;top:840px;width:76px">信用分明细</div>
<div class="btn" style="left:1817px;top:840px;width:64px">详细信息</div>
<div class="td" style="left:204px;top:872px">4659</div>
<div class="td gd" style="left:299px;top:872px">D8FAA852-8403-42E9-A9FE-59B5E3D4FD41</div>
<div class="td gd" style="left:669px;top:872px">88赚-D8FAA852-8403-</div>
<div class="td" style="left:909px;top:872px">会员</div>
<div class="td" style="left:969px;top:872px">0.00元</div>
<div class="td" style="left:1039px;top:872px">0.00元</div>
<div class="td" style="left:1109px;top:872px">300</div>
<div class="td" style="left:1157px;top:872px">2020-06-09 09:14</div>
<div class="td lk" style="left:1273px;top:872px">0人</div>
<div class="td" style="left:1333px;top:872px">正常</div>
<div class="btn" style="left:1369px;top:877px;width:64px">调整团队</div>
<div class="btn" style="left:1437px;top:877px;width:83px">线下充值VIP</div>
<div class="btn" style="left:1523px;top:877px;width:64px">余额充值</div>
<div class="btn" style="left:1591px;top:877px;width:76px">信用分充值</div>
<div class="btn" style="left:1670px;top:877px;width:64px">资金明细</div>
<div class="btn" style="left:1738px;top:877px;width:76px">信用分明细</div>
<div class="btn" style="left:1817px;top:877px;width:64px">详细信息</div>
 </div>
</div>
<!-- iframe v scrollbar -->
<div class="abs" style="left:1903px;top:53px;width:17px;height:851px;background:#f1f1f1"></div>
<div class="abs" style="left:1905px;top:70px;width:13px;height:514px;background:#c1c1c1"></div>
<div class="abs" style="left:1907px;top:60px;width:0;height:0;border-left:4px solid transparent;border-right:4px solid transparent;border-bottom:4px solid #a3a3a3"></div>
<div class="abs" style="left:1907px;top:891px;width:0;height:0;border-left:4px solid transparent;border-right:4px solid transparent;border-top:4px solid #505050"></div>
<!-- footer -->
<div class="abs" style="left:190px;top:1018px;width:1730px;height:1px;background:#e4e9ee"></div>
<span class="abs" style="left:995px;top:1029px;font-size:13px;line-height:20px;color:#478fca;white-space:nowrap;letter-spacing:0.32px">© 任务系统 - 源码来自阿奇源码：www.hnymwl.com</span>
<div class="abs" style="left:1891px;top:1026px;width:27px;height:26px;background:#555"><svg class="abs" style="left:9px;top:10px" width="9" height="9" viewBox="0 0 9 9"><path d="M1 4.5L4.5 1 8 4.5M1 8L4.5 4.5 8 8" fill="none" stroke="#fff" stroke-width="1.5"/></svg></div>
</body></html>
